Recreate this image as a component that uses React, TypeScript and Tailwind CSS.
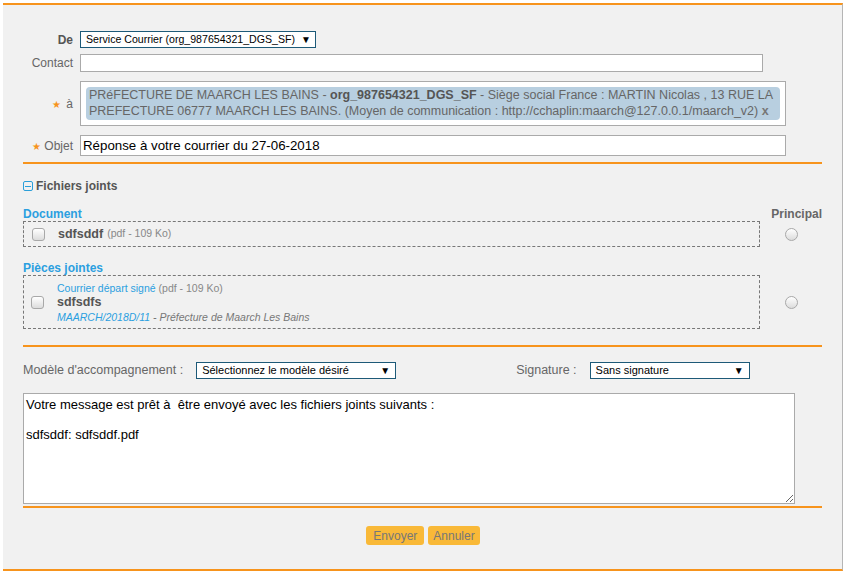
import React from "react";

const ORANGE = "border-[#f7941d]";

function Checkbox() {
  return (
    <span className="inline-block w-[13px] h-[13px] rounded-[3px] border border-[#a8a8a8] bg-gradient-to-b from-white to-[#dcdcdc]" />
  );
}

function Radio() {
  return (
    <span className="inline-block w-[13px] h-[13px] rounded-full border border-[#a8a8a8] bg-gradient-to-b from-white to-[#dcdcdc]" />
  );
}

function Select({ text, width, size }: { text: string; width: string; size: string }) {
  return (
    <div
      className={`${width} h-[17px] border border-[#1d5a78] bg-white flex items-center justify-between pl-[5px] pr-[5px] text-black ${size}`}
    >
      <span className="leading-none whitespace-nowrap">{text}</span>
      <span className="text-[10px] leading-none ml-[6px]">▼</span>
    </div>
  );
}

export default function App() {
  return (
    <div
      className="w-[844px] h-[571px] bg-white pl-[3px] pt-[3px] text-[#666]"
      style={{ fontFamily: '"Liberation Sans", Arial, sans-serif' }}
    >
      <div className={`w-[840px] h-[568px] bg-[#f1f1f1] border-t-2 border-b-2 ${ORANGE} border-r border-r-[#b5b5b5] flex flex-col`}>
        {/* en-tête du formulaire */}
        <div className="pt-[26px] flex flex-col">
          <div className="flex items-center h-[17px]">
            <div className="w-[70px] text-right text-[12px] font-bold text-[#555]">De</div>
            <div className="ml-[7px]">
              <Select text="Service Courrier (org_987654321_DGS_SF)" width="w-[236px]" size="text-[10.6px]" />
            </div>
          </div>
          <div className="flex items-center h-[18px] mt-[6px]">
            <div className="w-[70px] text-right text-[12px]">Contact</div>
            <div className="ml-[7px] w-[683px] h-[18px] border border-[#aaa] bg-white" />
          </div>
          <div className="flex items-center mt-[9px]">
            <div className="w-[70px] text-right text-[12px]">
              <span className="text-[#f7941d] text-[10px] mr-[5px]">★</span>à
            </div>
            <div className="ml-[7px] w-[706px] h-[45px] border border-[#aaa] bg-white px-[5px] pt-[5px]">
              <div className="bg-[#b8cfe0] rounded-[4px] h-[33px] px-[3px] pt-[1px] text-[12.5px] leading-[15.5px] text-[#666]">
                <p>
                  PRéFECTURE DE MAARCH LES BAINS - <b className="text-[#555]">org_987654321_DGS_SF</b> - Siège social France : MARTIN Nicolas , 13 RUE LA
                </p>
                <p>
                  PREFECTURE 06777 MAARCH LES BAINS. (Moyen de communication : http://cchaplin:maarch@127.0.0.1/maarch_v2){" "}
                  <b className="text-[#777]">x</b>
                </p>
              </div>
            </div>
          </div>
          <div className="flex items-center mt-[9px]">
            <div className="w-[70px] text-right text-[12px]">
              <span className="text-[#f7941d] text-[10px] mr-[3px]">★</span>Objet
            </div>
            <div className="ml-[7px] w-[706px] h-[21px] border border-[#aaa] bg-white pl-[2px] flex items-center text-[13.3px] text-black">
              Réponse à votre courrier du 27-06-2018
            </div>
          </div>
        </div>

        <div className={`ml-[20px] w-[799px] border-t-2 ${ORANGE} mt-[6px]`} />

        {/* fichiers joints */}
        <div className="ml-[20px] w-[799px] flex flex-col">
          <div className="flex items-center mt-[15px] h-[14px] text-[12px] font-bold text-[#555]">
            <span className="w-[10px] h-[10px] border border-[#2b9fd9] rounded-[2px] flex items-center justify-center mr-[3px]">
              <span className="w-[6px] h-px bg-[#2b9fd9]" />
            </span>
            Fichiers joints
          </div>

          <div className="flex mt-[14px]">
            <div className="w-[737px] flex flex-col">
              <div className="text-[12px] font-bold text-[#2b9fe0] leading-[14px]">Document</div>
              <div className="h-[26px] border border-dashed border-[#777] flex items-center pl-[8px]">
                <Checkbox />
                <span className="ml-[13px] text-[12.5px] font-bold text-[#555]">sdfsddf</span>
                <span className="ml-[4px] text-[10.5px] text-[#888]">(pdf - 109 Ko)</span>
              </div>
            </div>
            <div className="flex-1 flex flex-col items-end">
              <div className="text-[12px] font-bold text-[#666] leading-[14px]">Principal</div>
              <div className="h-[26px] flex items-center pr-[24px]">
                <Radio />
              </div>
            </div>
          </div>

          <div className="flex mt-[14px]">
            <div className="w-[737px] flex flex-col">
              <div className="text-[12px] font-bold text-[#2b9fe0] leading-[14px]">Pièces jointes</div>
              <div className="h-[54px] border border-dashed border-[#777] flex items-center pl-[7px]">
                <Checkbox />
                <div className="ml-[13px] flex flex-col">
                  <div className="text-[10.5px] leading-[14px]">
                    <span className="text-[#2b9fe0]">Courrier départ signé</span>
                    <span className="text-[#888]"> (pdf - 109 Ko)</span>
                  </div>
                  <div className="text-[12.5px] font-bold text-[#555] leading-[15px]">sdfsdfs</div>
                  <div className="text-[10.5px] italic leading-[14px]">
                    <span className="text-[#2b9fe0]">MAARCH/2018D/11</span>
                    <span className="text-[#777]"> - Préfecture de Maarch Les Bains</span>
                  </div>
                </div>
              </div>
            </div>
            <div className="flex-1 flex flex-col items-end">
              <div className="h-[14px]" />
              <div className="h-[54px] flex items-center pr-[24px]">
                <Radio />
              </div>
            </div>
          </div>
        </div>

        <div className={`ml-[20px] w-[799px] border-t-2 ${ORANGE} mt-[16px]`} />

        {/* modèle et signature */}
        <div className="ml-[20px] flex items-center mt-[15px] h-[17px] text-[12.5px]">
          <span>Modèle d'accompagnement :</span>
          <div className="ml-[13px]">
            <Select text="Sélectionnez le modèle désiré" width="w-[200px]" size="text-[11px]" />
          </div>
          <span className="ml-[120px]">Signature :</span>
          <div className="ml-[13px]">
            <Select text="Sans signature" width="w-[160px]" size="text-[11px]" />
          </div>
        </div>

        <textarea
          className="ml-[20px] mt-[14px] w-[772px] h-[111px] border border-[#aaa] bg-white text-[13px] leading-[15px] text-black px-[2px] pt-[3px] outline-none"
          style={{ fontFamily: '"Liberation Sans", Arial, sans-serif' }}
          defaultValue={"Votre message est prêt à  être envoyé avec les fichiers joints suivants :\n\nsdfsddf: sdfsddf.pdf"}
        />

        <div className={`ml-[20px] w-[799px] border-t-2 ${ORANGE} mt-[2px]`} />

        <div className="flex justify-center gap-[4px] mt-[18px] pl-[1px]">
          <button className="h-[19px] px-[7px] rounded-[3px] bg-[#f9b938] text-[12px] text-[#777] leading-none">
            Envoyer
          </button>
          <button className="h-[19px] px-[5px] rounded-[3px] bg-[#f9b938] text-[12px] text-[#777] leading-none">
            Annuler
          </button>
        </div>
      </div>
    </div>
  );
}
